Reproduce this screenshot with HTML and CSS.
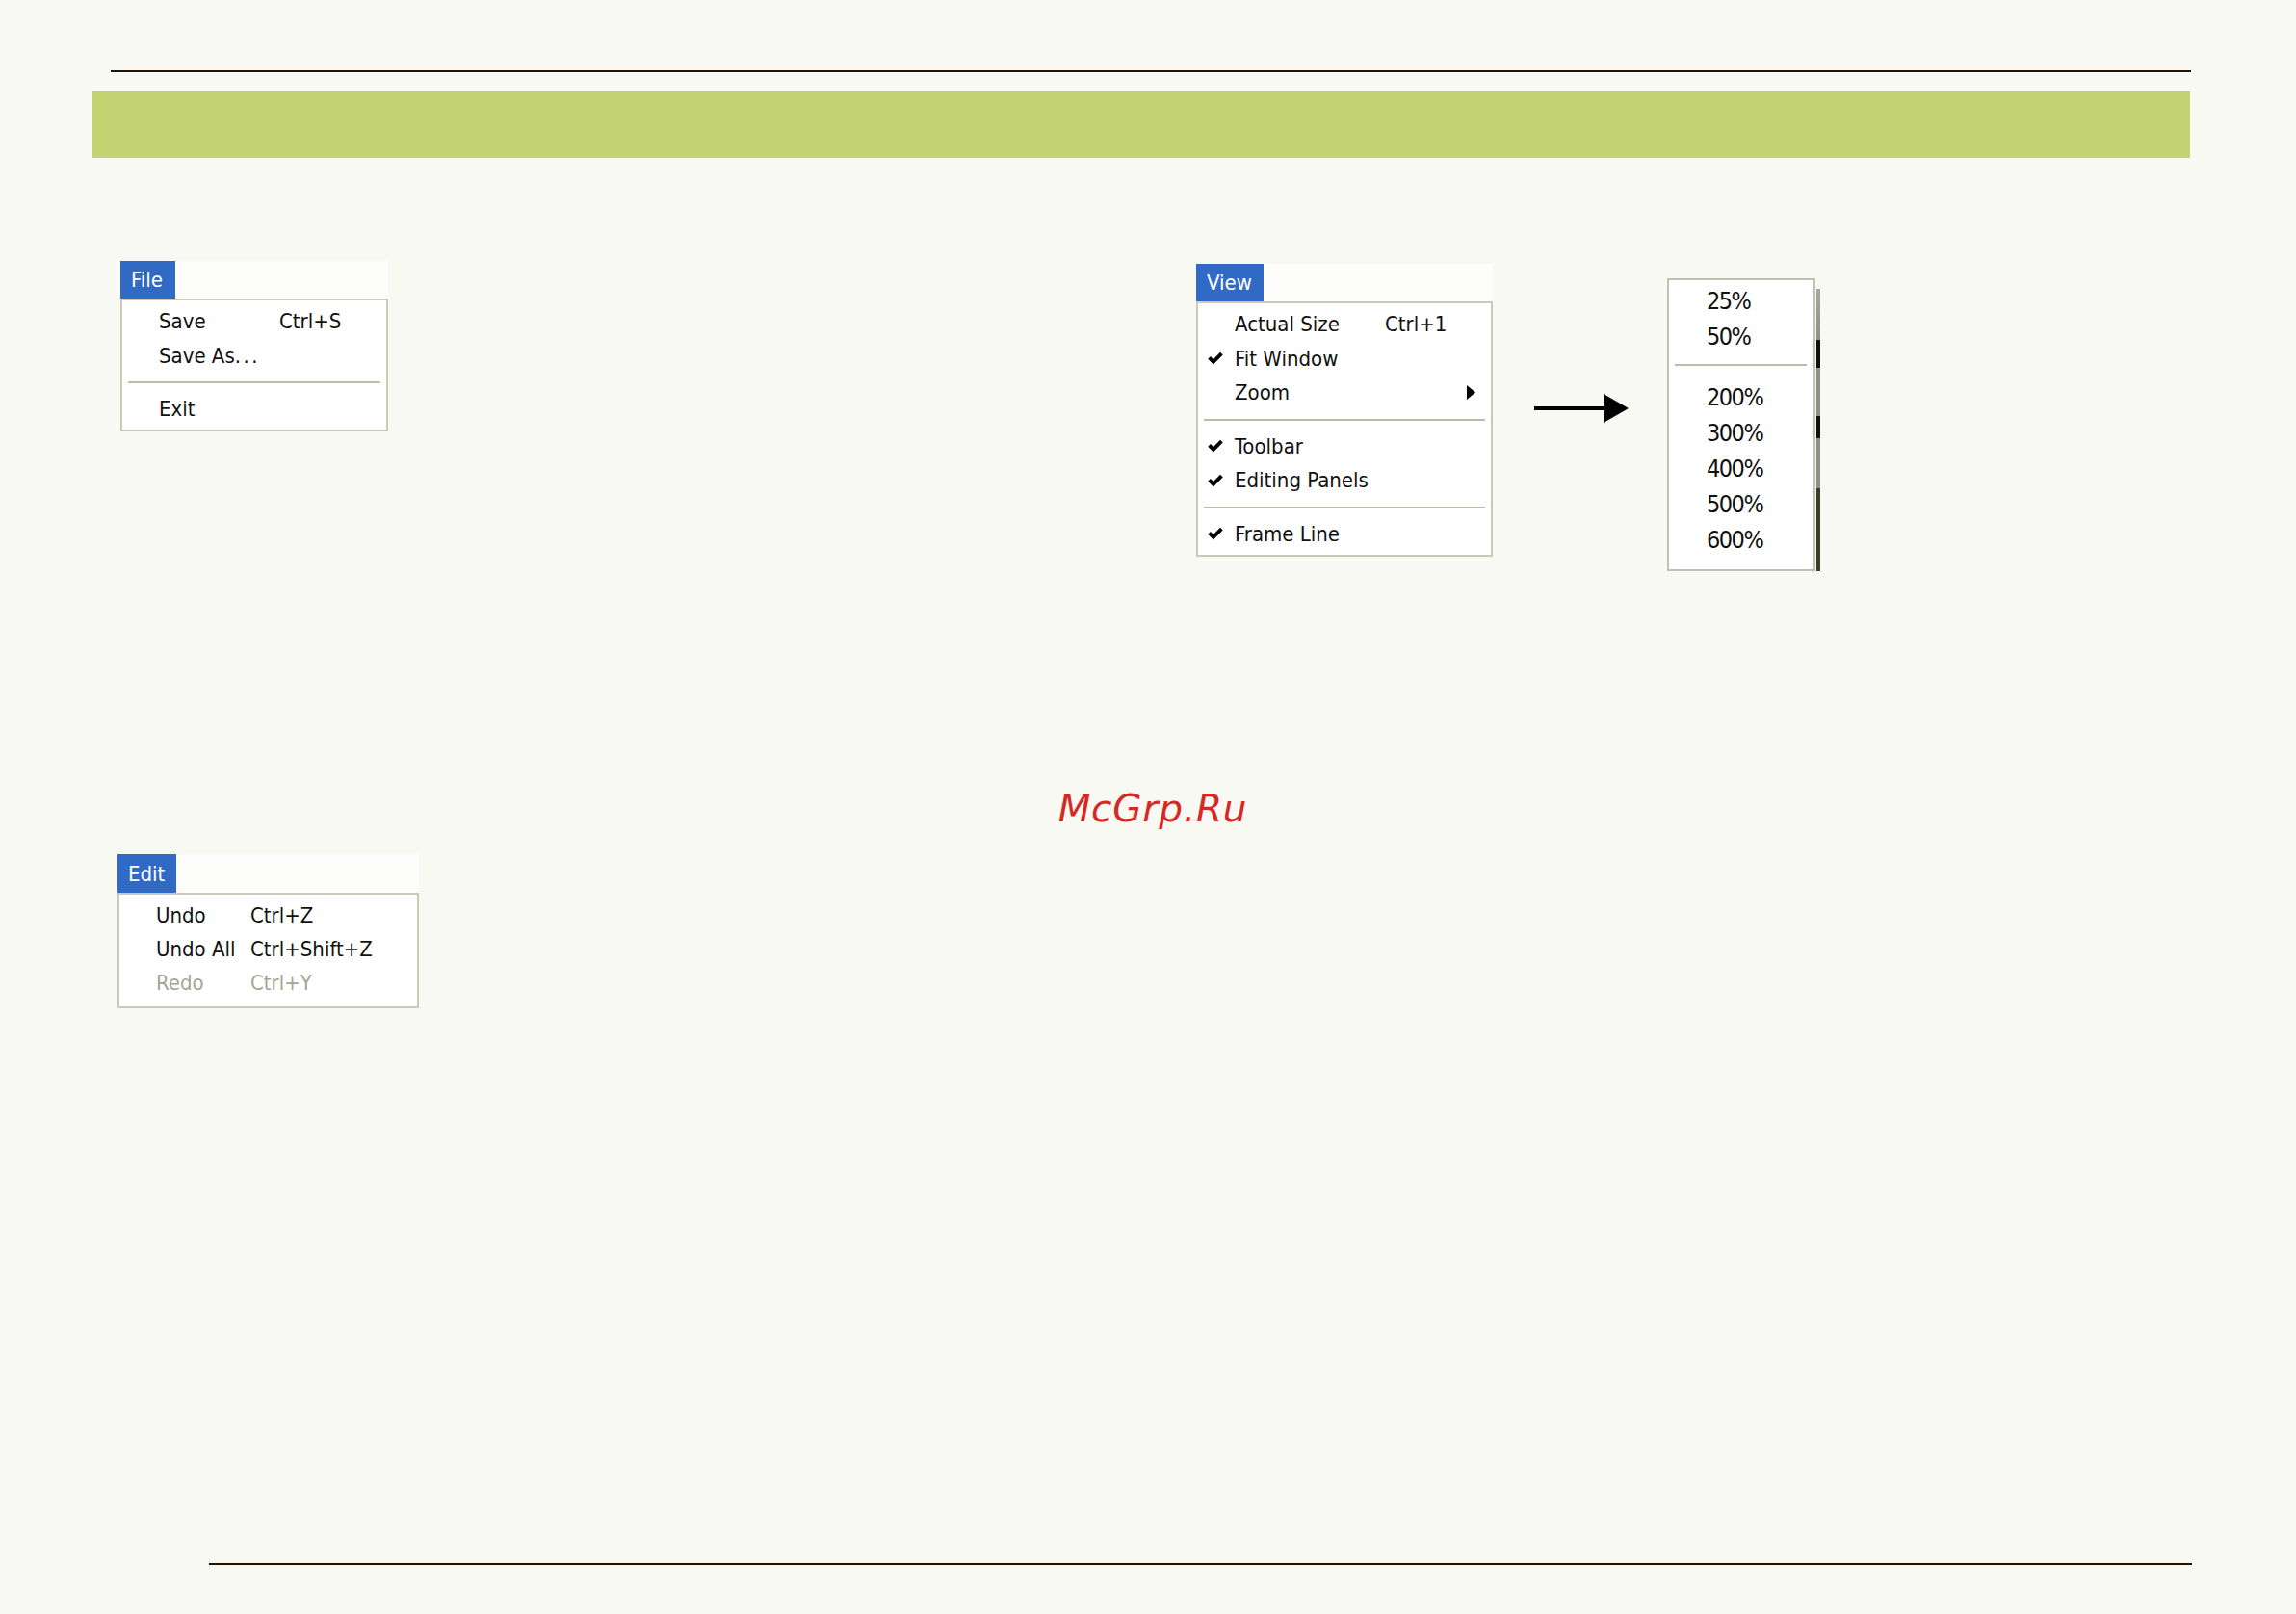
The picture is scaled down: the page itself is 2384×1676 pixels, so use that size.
FILE: index.html
```html
<!DOCTYPE html>
<html lang="en">
<head>
<meta charset="utf-8">
<title>Menus</title>
<link rel="stylesheet" href="styles.css">
</head>
<body>
<div class="page">
  <div class="rule rule-top"></div>
  <div class="band"></div>

  <section class="row-top">
    <div class="menu menu-file">
      <div class="menu-bar"><span class="tab tab-file">File</span></div>
      <div class="menu-body">
        <div class="item"><span class="check"></span><span class="label">Save</span><span class="key">Ctrl+S</span></div>
        <div class="item"><span class="check"></span><span class="label">Save As<span class="dots">...</span></span></div>
        <div class="sep"></div>
        <div class="item"><span class="check"></span><span class="label">Exit</span></div>
      </div>
    </div>

    <div class="view-group">
      <div class="menu menu-view">
        <div class="menu-bar"><span class="tab tab-view">View</span></div>
        <div class="menu-body">
          <div class="item"><span class="check"></span><span class="label">Actual Size</span><span class="key">Ctrl+1</span></div>
          <div class="item"><span class="check"><svg viewBox="0 0 15 15" class="tick"><path d="M1.5 7 L5.5 11 L13.5 3"/></svg></span><span class="label">Fit Window</span></div>
          <div class="item"><span class="check"></span><span class="label">Zoom</span><span class="submark"><svg viewBox="0 0 9 15" class="tri"><path d="M0 0 L9 7.5 L0 15 Z"/></svg></span></div>
          <div class="sep"></div>
          <div class="item"><span class="check"><svg viewBox="0 0 15 15" class="tick"><path d="M1.5 7 L5.5 11 L13.5 3"/></svg></span><span class="label">Toolbar</span></div>
          <div class="item"><span class="check"><svg viewBox="0 0 15 15" class="tick"><path d="M1.5 7 L5.5 11 L13.5 3"/></svg></span><span class="label">Editing Panels</span></div>
          <div class="sep"></div>
          <div class="item"><span class="check"><svg viewBox="0 0 15 15" class="tick"><path d="M1.5 7 L5.5 11 L13.5 3"/></svg></span><span class="label">Frame Line</span></div>
        </div>
      </div>

      <svg class="arrow" viewBox="0 0 98 30"><rect x="0" y="13" width="74" height="4"/><path d="M72 0 L98 15 L72 30 Z"/></svg>

      <div class="submenu">
        <div class="sub-item">25%</div>
        <div class="sub-item">50%</div>
        <div class="sub-sep"></div>
        <div class="sub-item">200%</div>
        <div class="sub-item">300%</div>
        <div class="sub-item">400%</div>
        <div class="sub-item">500%</div>
        <div class="sub-item">600%</div>
        <div class="sub-shadow"></div>
      </div>
    </div>
  </section>

  <div class="watermark">McGrp.Ru</div>

  <div class="menu menu-edit">
    <div class="menu-bar"><span class="tab tab-edit">Edit</span></div>
    <div class="menu-body">
      <div class="item"><span class="check"></span><span class="label">Undo</span><span class="key">Ctrl+Z</span></div>
      <div class="item"><span class="check"></span><span class="label">Undo All</span><span class="key">Ctrl+Shift+Z</span></div>
      <div class="item disabled"><span class="check"></span><span class="label">Redo</span><span class="key">Ctrl+Y</span></div>
    </div>
  </div>

  <div class="rule rule-bottom"></div>
</div>
</body>
</html>
```

FILE: styles.css
```css
html, body {
  margin: 0;
  padding: 0;
  background: #f9f9f4;
}

.page {
  width: 2384px;
  height: 1676px;
  overflow: hidden;
  font-family: "DejaVu Sans Condensed", "DejaVu Sans", sans-serif;
  font-stretch: condensed;
  color: #111;
}

.rule {
  height: 2px;
  background: #221400;
}
.rule-top {
  margin: 73px 0 0 115px;
  width: 2160px;
}
.rule-bottom {
  margin: 576px 0 0 217px;
  width: 2059px;
}

.band {
  margin: 20px 0 0 96px;
  width: 2178px;
  height: 69px;
  background: #c4d372;
}

/* top row */
.row-top {
  display: flex;
  align-items: flex-start;
  margin-top: 107px;
  padding-left: 125px;
}

.view-group {
  display: flex;
  align-items: flex-start;
  margin-left: 839px;
  padding-top: 3px;
}

/* menus */
.menu {
  display: flex;
  flex-direction: column;
}
.menu-file { width: 278px; }
.menu-view { width: 308px; }
.menu-edit { width: 313px; margin: 25px 0 0 122px; }

.menu-bar {
  display: flex;
  height: 39px;
  background: #fdfdfb;
}
.menu-edit .menu-bar { height: 40px; }

.tab {
  display: flex;
  align-items: center;
  padding-left: 11px;
  background: #316ac5;
  color: #fff;
  font-size: 22px;
  box-sizing: border-box;
}
.tab-file { width: 57px; }
.tab-view { width: 70px; }
.tab-edit { width: 61px; }

.menu-body {
  border: 2px solid #ccc9ba;
  background: #fff;
  padding: 4px 0 3px;
}
.menu-view .menu-body { padding: 4px 0 4px; }
.menu-edit .menu-body { padding: 4px 0 7px; }

.item {
  display: flex;
  align-items: center;
  height: 35.5px;
  font-size: 22px;
  white-space: nowrap;
}
.menu-edit .item { height: 35px; }

.dots { letter-spacing: 2.5px; }

.check {
  width: 38px;
  flex: none;
  display: flex;
  align-items: center;
}
.tick {
  width: 16px;
  height: 16px;
  margin-left: 10px;
  fill: none;
  stroke: #000;
  stroke-width: 3.6;
}

.menu-file .label { width: 125px; }
.menu-view .label { width: 156px; }
.menu-edit .label { width: 98px; }

.submark {
  margin-left: auto;
  margin-right: 16px;
  display: flex;
}
.tri {
  width: 9px;
  height: 15px;
  fill: #000;
}

.disabled { color: #a7a593; }

.sep {
  height: 20px;
  display: flex;
  align-items: center;
  padding: 0 6px;
}
.sep::before {
  content: "";
  flex: 1;
  height: 2px;
  background: #bdbaa9;
}

/* arrow */
.arrow {
  width: 98px;
  height: 30px;
  margin: 135px 0 0 43px;
  fill: #000;
}

/* zoom submenu */
.submenu {
  position: relative;
  width: 154px;
  box-sizing: border-box;
  margin: 15px 0 0 40px;
  border: 2px solid #c3c0ae;
  background: #fff;
  padding: 3px 0 10px;
}
.sub-item {
  height: 37px;
  display: flex;
  align-items: center;
  padding-left: 39px;
  font-size: 25px;
  letter-spacing: -1.5px;
  color: #111;
}
.sub-sep {
  height: 26px;
  padding: 10px 7px 0 6px;
  box-sizing: border-box;
}
.sub-sep::before {
  content: "";
  display: block;
  height: 2px;
  background: #bdbaa9;
}
.submenu { padding-bottom: 12px; }
.sub-shadow {
  position: absolute;
  right: -7px;
  top: 9px;
  bottom: -2px;
  width: 4px;
  background: linear-gradient(to bottom,
    #a8a8a0 0px, #8f8f88 53px,
    #111 53px, #111 82px,
    #8f8f88 82px, #8f8f88 132px,
    #111 132px, #111 155px,
    #8f8f88 155px, #8f8f88 207px,
    #3d3c2a 207px, #3d3c2a 100%);
}

/* watermark */
.watermark {
  margin-top: 225px;
  padding-left: 10px;
  text-align: center;
  font-family: "DejaVu Sans", sans-serif;
  font-stretch: normal;
  font-style: italic;
  font-size: 39px;
  line-height: 44px;
  letter-spacing: 0.8px;
  color: #d42a26;
}
```
